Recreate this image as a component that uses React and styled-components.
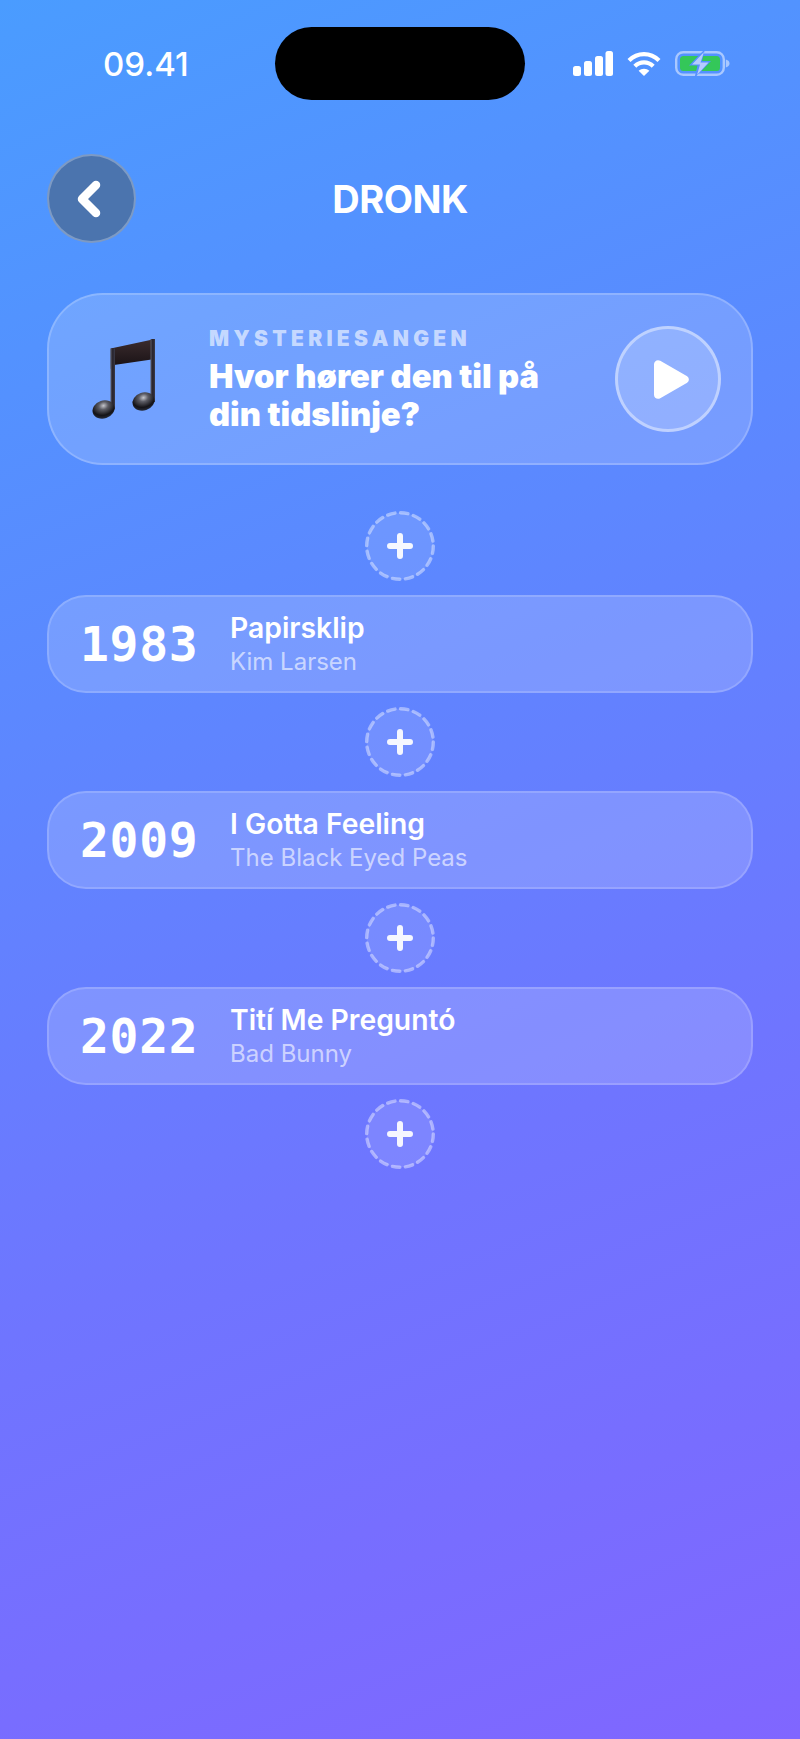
import React from 'react'
import styled, { createGlobalStyle } from 'styled-components'

const GlobalStyle = createGlobalStyle`
  html, body {
    margin: 0;
    padding: 0;
  }
  * {
    box-sizing: border-box;
  }
`

const Page = styled.div`
  width: 800px;
  height: 1739px;
  overflow: hidden;
  padding: 27px 47px 0 48px;
  font-family: Inter, 'Liberation Sans', sans-serif;
  color: #fff;
  background: linear-gradient(158deg, #4a9cff 0%, #5c88ff 35%, #6f75ff 65%, #8066ff 100%);
`

const StatusBar = styled.div`
  display: grid;
  grid-template-columns: 1fr 250px 1fr;
  align-items: center;
  height: 73px;
  margin: 0 -47px 0 -48px;
`

const Time = styled.div`
  padding-left: 103px;
  font-size: 33px;
  font-weight: 500;
`

const Island = styled.div`
  height: 73px;
  border-radius: 37px;
  background: #000;
`

const StatusIcons = styled.div`
  display: flex;
  align-items: center;
  gap: 14px;
  padding-left: 48px;
`

const Header = styled.header`
  position: relative;
  display: flex;
  align-items: center;
  justify-content: center;
  height: 89px;
  margin: 54px 0 0 -1px;
`

const BackButton = styled.button`
  position: absolute;
  left: 0;
  top: 0;
  display: flex;
  align-items: center;
  justify-content: center;
  width: 89px;
  height: 89px;
  padding: 0 6px 0 0;
  border: 2px solid rgba(255, 255, 255, 0.28);
  border-radius: 50%;
  background: #4b74ae;
`

const Title = styled.h1`
  margin: 0;
  font-size: 38px;
  font-weight: 700;
  letter-spacing: -0.5px;
`

const MysteryCard = styled.section`
  display: flex;
  align-items: center;
  height: 172px;
  margin: 50px 0 0 -1px;
  padding: 0 30px 0 43px;
  border: 2px solid rgba(255, 255, 255, 0.2);
  border-radius: 56px;
  background: rgba(255, 255, 255, 0.17);
`

const NoteSvg = styled.svg`
  flex: none;
  margin-top: 2px;
`

const MysteryText = styled.div`
  flex: 1;
  margin-left: 51px;
`

const Label = styled.div`
  font-size: 21px;
  font-weight: 900;
  line-height: 26px;
  letter-spacing: 4.3px;
  color: rgba(255, 255, 255, 0.62);
`

const Question = styled.div`
  width: 350px;
  margin-top: 5px;
  font-size: 32.7px;
  font-weight: 900;
  line-height: 38px;
`

const PlayButton = styled.button`
  display: flex;
  align-items: center;
  justify-content: center;
  flex: none;
  width: 106px;
  height: 106px;
  padding: 0 0 0 6px;
  border: 3px solid rgba(255, 255, 255, 0.42);
  border-radius: 50%;
  background: rgba(255, 255, 255, 0.2);
`

const Timeline = styled.div`
  display: flex;
  flex-direction: column;
  align-items: center;
  gap: 14px;
  margin: 45.5px 0 0 -1px;
`

const AddSlot = styled.button`
  display: block;
  width: 70px;
  height: 70px;
  padding: 0;
  border: 0;
  background: none;
`

const SongRow = styled.div`
  display: flex;
  align-items: center;
  width: 100%;
  height: 98px;
  padding-left: 31px;
  border: 2px solid rgba(255, 255, 255, 0.17);
  border-radius: 39px;
  background: rgba(255, 255, 255, 0.17);
`

const Year = styled.div`
  width: 150px;
  font-family: 'DejaVu Sans Mono', 'Liberation Mono', monospace;
  font-size: 48px;
  font-weight: 700;
  letter-spacing: 0.7px;
`

const SongText = styled.div`
  padding-top: 2px;
`

const SongTitle = styled.div`
  font-size: 28.3px;
  font-weight: 600;
  line-height: 32px;
`

const Artist = styled.div`
  margin-top: 2px;
  font-size: 24px;
  font-weight: 400;
  line-height: 32px;
  color: rgba(255, 255, 255, 0.62);
`

const songs = [
  { year: 1983, title: 'Papirsklip', artist: 'Kim Larsen' },
  { year: 2009, title: 'I Gotta Feeling', artist: 'The Black Eyed Peas' },
  { year: 2022, title: 'Tití Me Preguntó', artist: 'Bad Bunny' }
]

const SignalIcon = () => (
  <svg width='40' height='25' viewBox='0 0 40 25' fill='#fff'>
    <rect x='0' y='15' width='8' height='10' rx='2.5' />
    <rect x='11' y='10' width='8' height='15' rx='2.5' />
    <rect x='22' y='5' width='8' height='20' rx='2.5' />
    <rect x='32.5' y='0' width='7.5' height='25' rx='2.5' />
  </svg>
)

const WifiIcon = () => (
  <svg width='34' height='25' viewBox='0 0 34 25' fill='none' stroke='#fff' strokeWidth='4.2' strokeLinecap='butt'>
    <path d='M2 9.5C10.5 1 23.5 1 32 9.5' />
    <path d='M7.8 15.2C13 10 21 10 26.2 15.2' />
    <path d='M17 25L11.6 19.8C14.6 17 19.4 17 22.4 19.8Z' fill='#fff' stroke='none' />
  </svg>
)

const BatteryIcon = () => (
  <svg width='55' height='27' viewBox='0 0 55 27' fill='none'>
    <rect x='1.2' y='2.2' width='47.6' height='22.6' rx='7' stroke='#a9c8ff' strokeWidth='2.4' />
    <rect x='5' y='6' width='40' height='15' rx='3.5' fill='#34c759' />
    <path d='M50.8 9.5C53.5 10.2 54.5 11.8 54.5 13.5C54.5 15.2 53.5 16.8 50.8 17.5Z' fill='#a9c8ff' />
    <path d='M30 -1L14 15.5H22.5L19.5 28L36 11H27Z' fill='#5490ff' />
    <path d='M29 2L17 14.5H25L22 25L33.5 12.5H25.5Z' fill='#b4ccff' />
  </svg>
)

const ChevronIcon = () => (
  <svg width='26' height='38' viewBox='0 0 26 38' fill='none' stroke='#fff' strokeWidth='8.5' strokeLinecap='round' strokeLinejoin='round'>
    <path d='M20 5L6 19L20 33' />
  </svg>
)

const PlayIcon = () => (
  <svg width='35' height='39' viewBox='0 0 37 41' fill='#fff'>
    <path d='M0 4.5C0 1 3.6-1 6.6 0.8L34.6 16.8C37.6 18.6 37.6 22.4 34.6 24.2L6.6 40.2C3.6 42 0 40 0 36.5Z' />
  </svg>
)

const AddIcon = () => (
  <svg width='70' height='70' viewBox='0 0 70 70' fill='none'>
    <circle
      cx='35'
      cy='35'
      r='33.3'
      fill='rgba(255,255,255,0.11)'
      stroke='rgba(255,255,255,0.42)'
      strokeWidth='3.4'
      strokeDasharray='7.5 5.6'
      strokeLinecap='round'
    />
    <path d='M35 25V45M25 35H45' stroke='rgba(255,255,255,0.93)' strokeWidth='6' strokeLinecap='round' />
  </svg>
)

const NoteIcon = () => (
  <NoteSvg width='66' height='84' viewBox='0 0 66 84'>
    <defs>
      <linearGradient id='noteStem' x1='0' y1='0' x2='1' y2='0'>
        <stop offset='0' stopColor='#5b5a66' />
        <stop offset='0.5' stopColor='#25212a' />
        <stop offset='1' stopColor='#3d3c4a' />
      </linearGradient>
      <linearGradient id='noteBeam' x1='0' y1='0' x2='0' y2='1'>
        <stop offset='0' stopColor='#3b2c2e' />
        <stop offset='0.85' stopColor='#1c1417' />
        <stop offset='1' stopColor='#3d3a4c' />
      </linearGradient>
      <radialGradient id='noteHead' cx='0.55' cy='0.3' r='0.75'>
        <stop offset='0' stopColor='#c5c6cc' />
        <stop offset='0.28' stopColor='#5d5d65' />
        <stop offset='0.7' stopColor='#141317' />
        <stop offset='1' stopColor='#2b3242' />
      </radialGradient>
    </defs>
    <path d='M18.7 10.5L63 1V21L22 27L18.7 31Z' fill='url(#noteBeam)' />
    <rect x='18.5' y='10.5' width='4.5' height='61' fill='url(#noteStem)' />
    <rect x='58.5' y='1' width='4.5' height='63' fill='url(#noteStem)' />
    <ellipse cx='11.5' cy='71.5' rx='11.2' ry='9' transform='rotate(-18 11.5 71.5)' fill='url(#noteHead)' />
    <ellipse cx='51.5' cy='63.5' rx='11.2' ry='9' transform='rotate(-18 51.5 63.5)' fill='url(#noteHead)' />
  </NoteSvg>
)

export default function App() {
  return (
    <Page>
      <GlobalStyle />
      <StatusBar>
        <Time>09.41</Time>
        <Island />
        <StatusIcons>
          <SignalIcon />
          <WifiIcon />
          <BatteryIcon />
        </StatusIcons>
      </StatusBar>
      <Header>
        <BackButton>
          <ChevronIcon />
        </BackButton>
        <Title>DRONK</Title>
      </Header>
      <MysteryCard>
        <NoteIcon />
        <MysteryText>
          <Label>MYSTERIESANGEN</Label>
          <Question>Hvor hører den til på din tidslinje?</Question>
        </MysteryText>
        <PlayButton>
          <PlayIcon />
        </PlayButton>
      </MysteryCard>
      <Timeline>
        <AddSlot>
          <AddIcon />
        </AddSlot>
        {songs.map(song => (
          <React.Fragment key={song.year}>
            <SongRow>
              <Year>{song.year}</Year>
              <SongText>
                <SongTitle>{song.title}</SongTitle>
                <Artist>{song.artist}</Artist>
              </SongText>
            </SongRow>
            <AddSlot>
              <AddIcon />
            </AddSlot>
          </React.Fragment>
        ))}
      </Timeline>
    </Page>
  )
}
